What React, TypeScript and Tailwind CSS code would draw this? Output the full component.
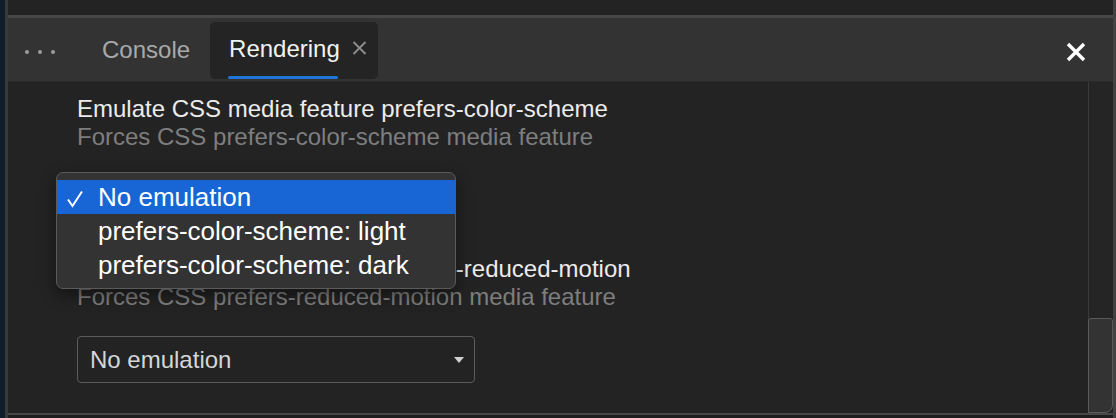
// App.tsx

import React from "react";

const FONT = "font-['Liberation_Sans',Helvetica,Arial,sans-serif]";

interface SectionProps {
  title: string;
  subtitle: string;
  className?: string;
  selectOpen?: boolean;
}

const Section: React.FC<SectionProps> = ({ title, subtitle, className = "", selectOpen = false }) => (
  <div className={`flex flex-col ${className}`}>
    <div className="text-[24px] leading-[28px] text-[#ececec] whitespace-nowrap">{title}</div>
    <div className="text-[24px] leading-[28px] text-[#7e7e7e] whitespace-nowrap">{subtitle}</div>
    {/* the open select is covered by its popup, so it keeps its place but isn't drawn */}
    <div
      className={`mt-[25px] w-[398px] h-[47px] border border-[#5c5c5c] rounded-[4px] flex items-center pl-[12px] pr-[10px] ${selectOpen ? "invisible" : ""}`}
    >
      <span className="flex-1 text-[24px] text-[#d6d6d6]">No emulation</span>
      <svg width="10" height="6" viewBox="0 0 10 6" className="mt-[1px]">
        <path d="M0 0 L10 0 L5 6 Z" fill="#d0d0d0" />
      </svg>
    </div>
  </div>
);

const options = ["No emulation", "prefers-color-scheme: light", "prefers-color-scheme: dark"];

export default function App() {
  return (
    <div className={`w-[1116px] h-[418px] flex bg-[#232323] overflow-hidden ${FONT}`}>
      {/* left edge */}
      <div className="w-[5px] bg-[#0f1d2a]" />
      <div className="w-[3px] bg-[#3a3a3a]" />

      <div className="flex-1 flex flex-col min-w-0">
        <div className="h-[15px] bg-[#232323]" />
        <div className="h-[3px] bg-[#474747]" />

        {/* tab bar */}
        <div className="h-[64px] bg-[#333333] border-b border-[#2a2a2a] flex items-center">
          <div className="ml-[17px] flex items-center gap-[9px] mt-[4px]">
            <span className="w-[4px] h-[4px] rounded-full bg-[#9c9c9c]" />
            <span className="w-[4px] h-[4px] rounded-full bg-[#9c9c9c]" />
            <span className="w-[4px] h-[4px] rounded-full bg-[#9c9c9c]" />
          </div>
          <div className="ml-[28px] px-[19px] text-[24px] text-[#a9a9a9] leading-[28px]">Console</div>
          <div className="relative ml-[1px] h-[57px] mt-[1px] w-[168px] rounded-[5px] bg-[#242424] flex items-center pl-[19px]">
            <span className="text-[24px] leading-[28px] text-[#f2f2f2] -mt-[3px]">Rendering</span>
            <svg width="15" height="14" viewBox="0 0 15 14" className="ml-[12px] -mt-[5px]">
              <path d="M1.5 1 L13.5 13 M13.5 1 L1.5 13" stroke="#8c8c8c" strokeWidth="2" />
            </svg>
            <span className="absolute left-[18px] bottom-0 w-[110px] h-[3px] rounded-full bg-[#1f75d8]" />
          </div>
          <div className="flex-1" />
          <svg width="20" height="20" viewBox="0 0 20 20" className="mr-[27px] mt-[4px]">
            <path d="M2 2 L18 18 M18 2 L2 18" stroke="#ffffff" strokeWidth="3.4" />
          </svg>
        </div>

        {/* content */}
        <div className="flex-1 flex min-h-0">
          <div className="relative flex-1 pl-[69px] pt-[13px]">
            <Section
              selectOpen
              title="Emulate CSS media feature prefers-color-scheme"
              subtitle="Forces CSS prefers-color-scheme media feature"
            />
            <Section
              className="mt-[32px]"
              title="Emulate CSS media feature prefers-reduced-motion"
              subtitle="Forces CSS prefers-reduced-motion media feature"
            />

            {/* open select popup */}
            <div className="absolute left-[48px] top-[90px] w-[400px] h-[117px] rounded-[7px] border border-[#5b5b5b] bg-[#333334] pt-[7px] shadow-[0_6px_16px_rgba(0,0,0,0.45)] overflow-hidden">
              {options.map((opt, i) => (
                <div
                  key={opt}
                  className={`h-[34px] flex items-center pl-[9px] text-[26px] text-white whitespace-nowrap ${i === 0 ? "bg-[#1866d6]" : ""}`}
                >
                  <span className="w-[32px] flex items-center">
                    {i === 0 && (
                      <svg width="18" height="18" viewBox="0 0 18 18" className="mt-[3px]">
                        <path d="M2 9.5 L6.5 16 L16 1.5" stroke="#ffffff" strokeWidth="2" fill="none" />
                      </svg>
                    )}
                  </span>
                  {opt}
                </div>
              ))}
            </div>
          </div>

          {/* scrollbar */}
          <div className="w-[25px] border-l border-[#3a3a3a] bg-[#252525] flex flex-col justify-end">
            <div className="h-[95px] -ml-[1px] bg-[#333333] border border-[#5a5a5a] rounded-t-[3px] rounded-br-[8px]" />
          </div>
        </div>

        <div className="h-[2px] bg-[#474747]" />
        <div className="h-[3px] bg-[#1e1e1e]" />
      </div>

      {/* right edge */}
      <div className="w-[3px] bg-[#424242]" />
    </div>
  );
}
